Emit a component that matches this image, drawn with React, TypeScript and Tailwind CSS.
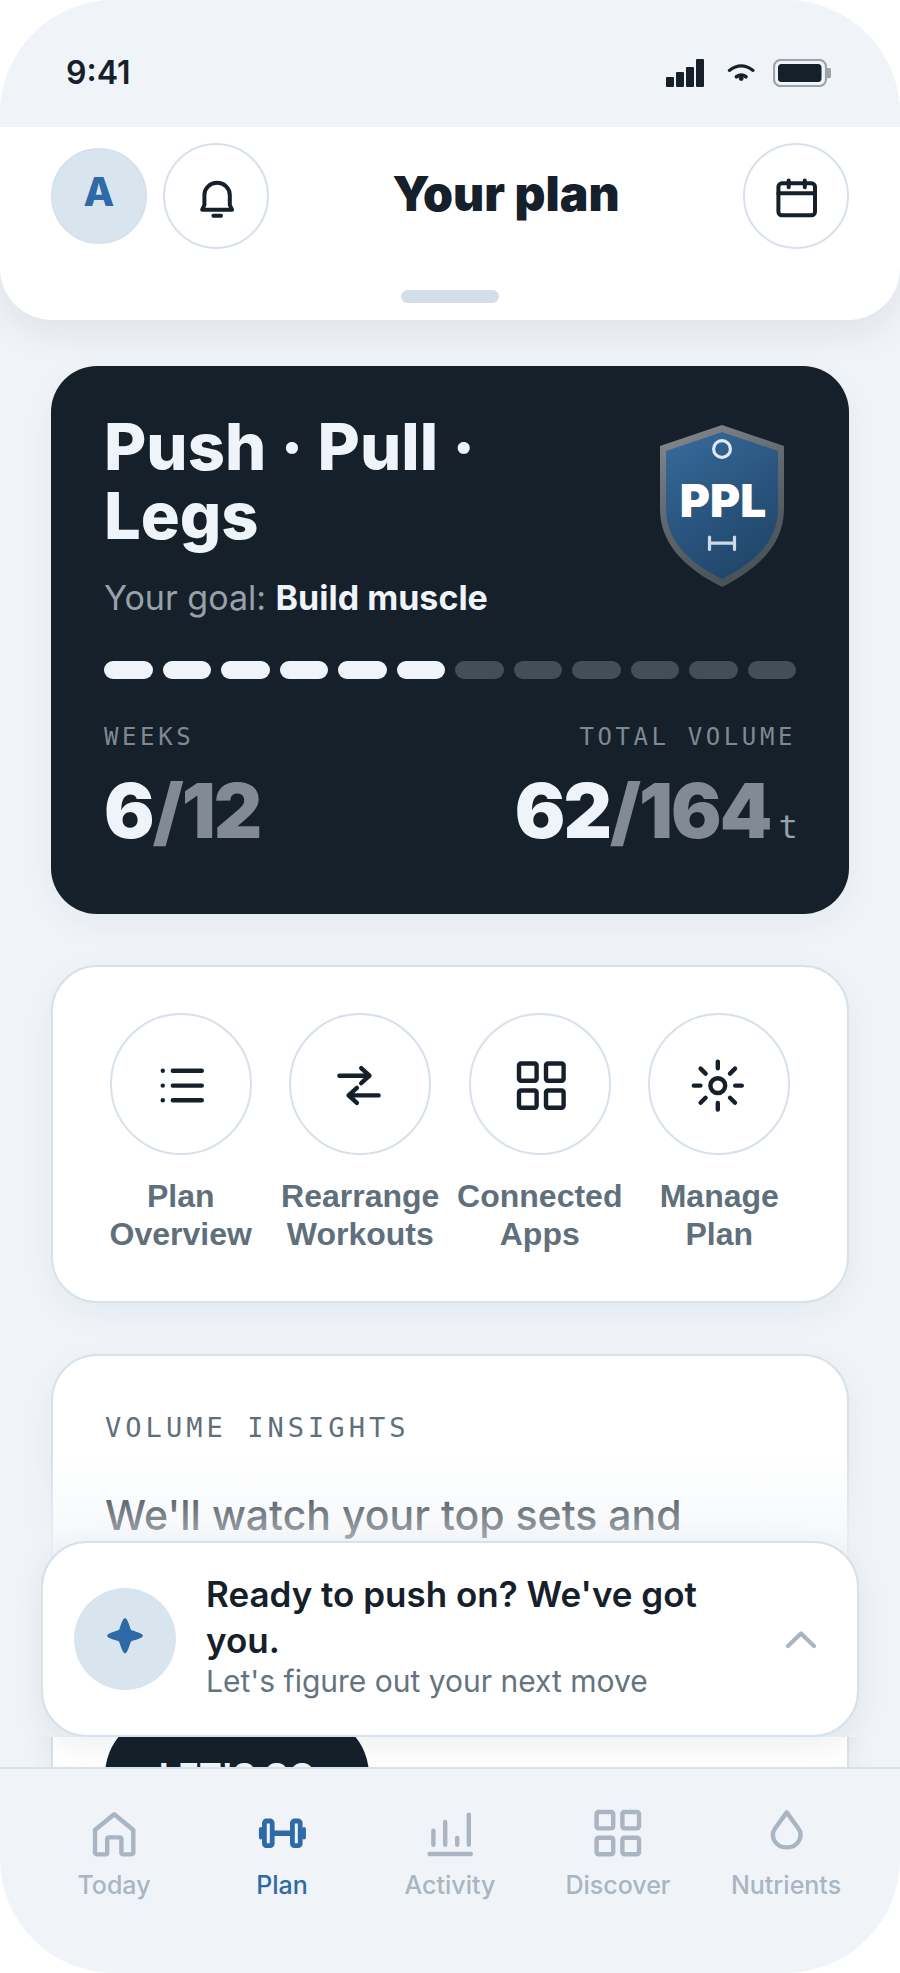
import type { ReactNode } from 'react';

const quickActions = [
  { label: 'Plan Overview', icon: <ListIcon /> },
  { label: 'Rearrange Workouts', icon: <SwapIcon /> },
  { label: 'Connected Apps', icon: <AppsIcon /> },
  { label: 'Manage Plan', icon: <ManageIcon /> },
];

const tabs = [
  { label: 'Today', icon: <HomeIcon /> },
  { label: 'Plan', icon: <DumbbellIcon />, active: true },
  { label: 'Activity', icon: <ActivityIcon /> },
  { label: 'Discover', icon: <DiscoverIcon /> },
  { label: 'Nutrients', icon: <DropIcon /> },
];

const TOTAL_WEEKS = 12;
const WEEKS_DONE = 6;

/* ICONS */

function Icon({ children }: { children: ReactNode }) {
  return (
    <svg
      className="size-14"
      viewBox="0 0 56 56"
      fill="none"
      stroke="currentColor"
      strokeWidth="4.4"
      strokeLinecap="round"
      strokeLinejoin="round"
      aria-hidden="true"
    >
      {children}
    </svg>
  );
}

function ListIcon() {
  return (
    <Icon>
      <path d="M19.8 14.7h29M19.8 29.6h29M19.8 44.2h29" />
      <g fill="currentColor" stroke="none">
        <circle cx="9.8" cy="14.7" r="2.2" />
        <circle cx="9.8" cy="29.6" r="2.2" />
        <circle cx="9.8" cy="44.2" r="2.2" />
      </g>
    </Icon>
  );
}

function SwapIcon() {
  return (
    <Icon>
      <path d="M7.4 19.7h30M29.2 12.2l8.3 7.5-8.3 7.5" />
      <path d="M46.6 39.4h-30M24.9 31.9l-8.3 7.5 8.3 7.5" />
    </Icon>
  );
}

function AppsIcon() {
  return (
    <Icon>
      <rect x="7" y="7.5" width="17.6" height="17.2" rx="2" />
      <rect x="34" y="7.5" width="17.6" height="17.2" rx="2" />
      <rect x="7" y="34.5" width="17.6" height="17.2" rx="2" />
      <rect x="34" y="34.5" width="17.6" height="17.2" rx="2" />
    </Icon>
  );
}

function ManageIcon() {
  return (
    <Icon>
      <circle cx="26.8" cy="29.6" r="7.4" />
      <path d="M26.8 5.6v6.6M26.8 47v6.6M2.8 29.6h6.6M44.2 29.6h6.6" />
      <path d="M9.6 12.6l5 5M44 12.6l-5 5M9.6 46.8l5-5M44 46.8l-5-5" />
    </Icon>
  );
}

function HomeIcon() {
  return (
    <Icon>
      <path d="M28.2 8.2L9 24v22.4a2 2 0 0 0 2 2h8.6a1.6 1.6 0 0 0 1.6-1.6V33a1.6 1.6 0 0 1 1.6-1.6h11a1.6 1.6 0 0 1 1.6 1.6v13.8a1.6 1.6 0 0 0 1.6 1.6h8.3a2 2 0 0 0 2-2V24z" />
    </Icon>
  );
}

function DumbbellIcon() {
  return (
    <Icon>
      <rect x="10.4" y="15" width="7.8" height="24.6" rx="2" strokeWidth="4.8" />
      <rect x="38.4" y="15" width="7.8" height="24.6" rx="2" strokeWidth="4.8" />
      <path d="M19 27.2h19" strokeWidth="5.4" />
      <path d="M6.8 22.8v8.8M50 22.8v8.8" strokeWidth="3.8" />
    </Icon>
  );
}

function ActivityIcon() {
  return (
    <Icon>
      <path d="M11.4 24.6v14.2M23.2 16v22.8M35.2 32v6.8M46.8 8.6v30.2M7.6 48h41.2" />
    </Icon>
  );
}

function DiscoverIcon() {
  return (
    <Icon>
      <rect x="6.6" y="6" width="16.6" height="16.4" rx="2" />
      <rect x="32.4" y="6" width="16.6" height="16.4" rx="2" />
      <rect x="6.6" y="31.8" width="16.6" height="16.4" rx="2" />
      <rect x="32.4" y="31.8" width="16.6" height="16.4" rx="2" />
    </Icon>
  );
}

function DropIcon() {
  return (
    <Icon>
      <path d="M28.7 6.4L17.2 22.2C11.5 30 17 41.4 28.7 41.4S45.9 30 40.2 22.2z" />
    </Icon>
  );
}

function PlanBadge() {
  return (
    <svg className="mt-[13px] mr-3 h-[162px] w-[124px] shrink-0" viewBox="0 0 124 162" role="img" aria-label="PPL badge">
      <defs>
        <linearGradient id="rim" x1="0" y1="0" x2="0.4" y2="1">
          <stop offset="0" stopColor="#868b8e" />
          <stop offset="0.5" stopColor="#626a6f" />
          <stop offset="1" stopColor="#4a535a" />
        </linearGradient>
        <linearGradient id="face" x1="0.2" y1="0" x2="0.7" y2="1">
          <stop offset="0" stopColor="#366897" />
          <stop offset="0.5" stopColor="#2a5580" />
          <stop offset="1" stopColor="#204668" />
        </linearGradient>
      </defs>
      <path d="M62 0L124 21V84C124 118 100 143 62 162C24 143 0 118 0 84V21Z" fill="url(#rim)" />
      <path d="M62 7L118 26V84C118 114 97 137 62 154C27 137 6 114 6 84V26Z" fill="url(#face)" />
      <circle cx="62" cy="24" r="8.4" fill="none" stroke="#dfe8f5" strokeWidth="3.2" />
      <text
        x="63"
        y="92"
        textAnchor="middle"
        fill="#fff"
        className="font-['Inter',sans-serif] text-[46px] font-black"
      >
        PPL
      </text>
      <path d="M49.5 112v12.5M74.5 112v12.5M49.5 118.2h25" stroke="#cddaea" strokeWidth="3.2" strokeLinecap="round" />
    </svg>
  );
}

/* SECTIONS */

function StatusBar() {
  return (
    <div className="relative z-20 flex h-[127px] shrink-0 items-center justify-between bg-[#f0f4f8] pt-[18px] pr-[69px] pl-[66px]">
      <span className="text-[32px] leading-10 font-semibold">9:41</span>
      <div className="flex items-center">
        <svg className="h-7 w-10" viewBox="0 0 40 28" fill="currentColor" aria-hidden="true">
          <rect x="1" y="18" width="8" height="10" rx="1" />
          <rect x="11" y="13" width="8" height="15" rx="1" />
          <rect x="21" y="8" width="8" height="20" rx="1" />
          <rect x="31" y="0" width="8" height="28" rx="1" />
        </svg>
        <svg className="mr-[18px] ml-[22px] h-[18px] w-7" viewBox="0 0 28 18" fill="none" stroke="currentColor" strokeLinecap="round" aria-hidden="true">
          <path d="M2.4 6.4Q14.2 -2.6 26 6.4" strokeWidth="3.2" />
          <path d="M9.4 12.8Q14.2 9.4 19 12.8" strokeWidth="3.6" />
          <circle cx="14.2" cy="14.6" r="2.4" fill="currentColor" stroke="none" />
        </svg>
        <svg className="h-7 w-[58px]" viewBox="0 0 58 28" fill="none" aria-hidden="true">
          <rect x="1" y="1" width="52" height="26" rx="6.5" stroke="#9ba3ac" strokeWidth="2.2" />
          <rect x="5" y="5" width="43.5" height="18" rx="3.5" fill="#15202b" />
          <path d="M54 9h2.5a2 2 0 0 1 2 2v6a2 2 0 0 1-2 2H54z" fill="#9ba3ac" />
        </svg>
      </div>
    </div>
  );
}

function Header() {
  return (
    <header className="relative z-10 shrink-0 rounded-b-[52px] bg-white px-[51px] pt-4 pb-[17px] shadow-[0_12px_36px_rgba(20,30,40,0.08)]">
      <div className="flex items-center justify-between">
        <div className="flex items-center gap-4">
          <button
            type="button"
            aria-label="Account"
            className="size-24 rounded-full border-2 border-[#d7e1ec] bg-[#d9e5ee] pb-2 text-[40px] leading-none font-extrabold text-[#2d6aa6]"
          >
            A
          </button>
          <button
            type="button"
            aria-label="Notifications"
            className="flex size-[106px] items-center justify-center rounded-full border-2 border-[#d7e1ec]"
          >
            <svg className="h-12 w-9" viewBox="0 0 36 48" fill="none" stroke="currentColor" strokeWidth="4" strokeLinecap="round" strokeLinejoin="round" aria-hidden="true">
              <path d="M6.4 33V23a12.7 12.2 0 0 1 25.4 0v10l2.2 4.7H4.2z" />
              <path d="M15.4 43.7h7.6" />
            </svg>
          </button>
        </div>

        <h1 className="pb-1 text-[48px] leading-14 font-black">Your plan</h1>

        <button
          type="button"
          aria-label="Calendar"
          className="flex size-[106px] items-center justify-center rounded-full border-2 border-[#d7e1ec]"
        >
          <svg className="size-12" viewBox="0 0 48 48" fill="none" stroke="currentColor" strokeWidth="4" strokeLinecap="round" aria-hidden="true">
            <rect x="6.4" y="11.3" width="36.6" height="32" rx="3.5" />
            <path d="M6.4 21.2H43M16.7 8.6v6.6M32.8 8.6v6.6" />
          </svg>
        </button>
      </div>
      <div className="mx-auto mt-[41px] h-[13px] w-[98px] rounded-full bg-[#d4deea]" />
    </header>
  );
}

function PlanCard() {
  return (
    <section className="rounded-[46px] bg-[#15202b] px-[53px] pt-[46px] pb-[65px] text-[#eff4fa] shadow-[0_10px_32px_rgba(20,30,40,0.05)]">
      <div className="flex items-start justify-between">
        <div>
          <h2 className="max-w-[440px] text-[65px] leading-[69px] font-extrabold">Push · Pull · Legs</h2>
          <p className="mt-[26px] text-[34px] leading-11 text-[#98a1aa]">
            Your goal: <strong className="font-bold text-[#eff4fa]">Build muscle</strong>
          </p>
        </div>
        <PlanBadge />
      </div>

      <div className="mt-[41px] flex gap-2.5">
        {Array.from({ length: TOTAL_WEEKS }, (_, week) => (
          <div
            key={week}
            className={week < WEEKS_DONE ? 'h-[18px] flex-1 rounded-full bg-[#eff4fa]' : 'h-[18px] flex-1 rounded-full bg-[#434e58]'}
          />
        ))}
      </div>

      <div className="mt-[42px] flex justify-between">
        <div>
          <p className="font-['DejaVu_Sans_Mono',monospace] text-[24px] leading-8 tracking-[0.15em] text-[#7f8992]">WEEKS</p>
          <p className="mt-5 text-[75px] leading-[76px] font-black tracking-tight">
            6<span className="text-[#828b93]">/12</span>
          </p>
        </div>
        <div className="text-right">
          <p className="font-['DejaVu_Sans_Mono',monospace] text-[24px] leading-8 tracking-[0.15em] text-[#7f8992]">TOTAL VOLUME</p>
          <p className="mt-5 text-[75px] leading-[76px] font-black tracking-tight">
            62<span className="text-[#828b93]">/164</span>
            <span className="ml-2 font-['DejaVu_Sans_Mono',monospace] text-[32px] leading-none font-normal text-[#98a1aa]">t</span>
          </p>
        </div>
      </div>
    </section>
  );
}

function QuickActions() {
  return (
    <section className="grid grid-cols-4 gap-2 rounded-[46px] border-2 border-[#d7e1ea] bg-white px-[42px] pt-[46px] pb-12 shadow-[0_10px_32px_rgba(20,30,40,0.05)]">
      {quickActions.map((action) => (
        <button key={action.label} type="button" className="flex flex-col items-center">
          <span className="flex size-[142px] items-center justify-center rounded-full border-2 border-[#d7e1ec]">
            {action.icon}
          </span>
          <span className="mt-[22px] px-1 text-center font-['Liberation_Sans',sans-serif] text-[32px] leading-[38px] font-bold text-[#5f6f7c]">
            {action.label}
          </span>
        </button>
      ))}
    </section>
  );
}

function VolumeInsights() {
  return (
    <section className="rounded-t-[46px] border-2 border-b-0 border-[#d7e1ea] bg-white px-[52px] pt-[54px] pb-20 shadow-[0_10px_32px_rgba(20,30,40,0.05)]">
      <h2 className="font-['DejaVu_Sans_Mono',monospace] text-[27px] leading-9 tracking-[0.15em] text-[#5f6f7c]">VOLUME INSIGHTS</h2>
      <p className="mt-[43px] text-[41px] leading-[52px] font-medium">We'll watch your top sets and</p>
      <button
        type="button"
        className="mt-[174px] h-[120px] rounded-full bg-[#15202b] px-[54px] text-[34px] font-bold text-[#eff4fa]"
      >
        LET'S GO
      </button>
    </section>
  );
}

function CoachBanner() {
  return (
    <div className="absolute inset-x-0 bottom-[30px] bg-linear-to-b from-[#f0f4f8]/0 to-[#f0f4f8] to-45% px-[41px] pt-[84px]">
      <button
        type="button"
        className="flex w-full items-center rounded-[46px] border-2 border-[#d7e1ea] bg-white py-7 pr-8 pl-[31px] text-left shadow-[0_10px_32px_rgba(20,30,40,0.07)]"
      >
        <span className="flex size-[102px] shrink-0 items-center justify-center rounded-full bg-[#d9e5ee] text-[#2d6aa6]">
          <svg className="size-12" viewBox="0 0 48 48" fill="currentColor" stroke="currentColor" strokeWidth="2.4" strokeLinejoin="round" aria-hidden="true">
            <path d="M24 4.2C25.6 5 26.6 9 28.2 13.6 29 16 29.4 16.2 32 17 36.5 18.4 40 19.2 40.6 20.7 40 22.2 36.5 23 32 24.4 29.4 25.2 29 25.4 28.2 27.8 26.6 32.4 25.6 36.4 24 37.2 22.4 36.4 21.4 32.4 19.8 27.8 19 25.4 18.6 25.2 16 24.4 11.5 23 8 22.2 7.4 20.7 8 19.2 11.5 18.4 16 17 18.6 16.2 19 16 19.8 13.6 21.4 9 22.4 5 24 4.2Z" />
          </svg>
        </span>
        <span className="ml-[30px] flex-1 pr-10 pb-2">
          <span className="block text-[35px] leading-[46px] font-semibold">Ready to push on? We've got you.</span>
          <span className="block text-[30px] leading-9 text-[#64747f]">Let's figure out your next move</span>
        </span>
        <svg className="size-12 shrink-0" viewBox="0 0 48 48" fill="none" stroke="#a9b5c2" strokeWidth="4.2" strokeLinecap="round" strokeLinejoin="round" aria-hidden="true">
          <path d="M11 31L24 18.5 37 31" />
        </svg>
      </button>
    </div>
  );
}

function TabBar() {
  return (
    <nav className="grid h-[206px] shrink-0 grid-cols-5 border-t-2 border-[#d7e1ea] px-[30px] pt-[37px]">
      {tabs.map((tab) => (
        <a
          key={tab.label}
          href="#"
          aria-current={tab.active ? 'page' : undefined}
          className={
            tab.active
              ? 'flex flex-col items-center gap-2 text-[25px] leading-[30px] font-medium text-[#2d6aa6]'
              : 'flex flex-col items-center gap-2 text-[25px] leading-[30px] font-medium text-[#a9b5c2]'
          }
        >
          {tab.icon}
          {tab.label}
        </a>
      ))}
    </nav>
  );
}

export default function App() {
  return (
    <div className="bg-white">
      <div className="flex h-screen flex-col overflow-hidden rounded-[114px] bg-[#f0f4f8] font-['Inter',sans-serif] text-[#15202b]">
        <StatusBar />
        <Header />
        <div className="relative min-h-0 flex-1 overflow-hidden">
          <main className="flex flex-col gap-[51px] px-[51px] pt-[46px]">
            <PlanCard />
            <QuickActions />
            <VolumeInsights />
          </main>
          <CoachBanner />
        </div>
        <TabBar />
      </div>
    </div>
  );
}
